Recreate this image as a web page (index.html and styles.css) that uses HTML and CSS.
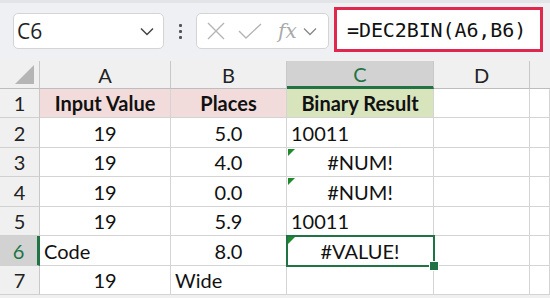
FILE: index.html
```html
<!DOCTYPE html>
<html lang="en">
<head>
  <meta charset="UTF-8" />
  <title>DEC2BIN</title>
  <link rel="stylesheet" href="styles.css">
</head>
<body>
  <div class="toolbar">
    <div class="namebox">
      <span>C6</span>
      <svg class="chev" width="14" height="9" viewBox="0 0 14 9"><path d="M1 1.5 L7 7.5 L13 1.5" fill="none" stroke="#444" stroke-width="1.5"/></svg>
    </div>
    <div class="dots"><i></i><i></i><i></i></div>
    <div class="fxbox">
      <svg width="20" height="20" viewBox="0 0 20 20"><path d="M2 2 L18 18 M18 2 L2 18" stroke="#b5b5b5" stroke-width="1.4"/></svg>
      <svg width="24" height="20" viewBox="0 0 24 20"><path d="M1 10 L8 17 L23 3" fill="none" stroke="#b5b5b5" stroke-width="1.4"/></svg>
      <span class="fx">fx</span>
      <svg width="14" height="9" viewBox="0 0 14 9"><path d="M1 1.5 L7 7.5 L13 1.5" fill="none" stroke="#888" stroke-width="1.3"/></svg>
    </div>
    <div class="formula">=DEC2BIN(A6,B6)</div>
  </div>

  <div class="sheet">
    <div class="corner"><span class="tri"></span></div>
    <div class="colhead">A</div>
    <div class="colhead">B</div>
    <div class="colhead active">C</div>
    <div class="colhead">D</div>
    <div class="colhead last"></div>

    <div class="rowhead">1</div>
    <div class="cell head pink">Input Value</div>
    <div class="cell head pink">Places</div>
    <div class="cell head green">Binary Result</div>
    <div class="cell"></div>
    <div class="cell"></div>

    <div class="rowhead">2</div>
    <div class="cell">19</div>
    <div class="cell">5.0</div>
    <div class="cell left">10011</div>
    <div class="cell"></div>
    <div class="cell"></div>

    <div class="rowhead">3</div>
    <div class="cell">19</div>
    <div class="cell">4.0</div>
    <div class="cell flag">#NUM!</div>
    <div class="cell"></div>
    <div class="cell"></div>

    <div class="rowhead">4</div>
    <div class="cell">19</div>
    <div class="cell">0.0</div>
    <div class="cell flag">#NUM!</div>
    <div class="cell"></div>
    <div class="cell"></div>

    <div class="rowhead">5</div>
    <div class="cell">19</div>
    <div class="cell">5.9</div>
    <div class="cell left">10011</div>
    <div class="cell"></div>
    <div class="cell"></div>

    <div class="rowhead active">6</div>
    <div class="cell left">Code</div>
    <div class="cell">8.0</div>
    <div class="cell flag selected">#VALUE!<span class="handle"></span></div>
    <div class="cell"></div>
    <div class="cell"></div>

    <div class="rowhead">7</div>
    <div class="cell">19</div>
    <div class="cell left">Wide</div>
    <div class="cell"></div>
    <div class="cell"></div>
    <div class="cell"></div>
  </div>
</body>
</html>
```

FILE: styles.css
```css
body {
  margin: 0;
  width: 550px;
  height: 298px;
  overflow: hidden;
  background: #f0f0f0;
  font-family: 'Lato', 'Open Sans', sans-serif;
  color: #1a1a1a;
}

.toolbar {
  height: 58px;
  box-sizing: border-box;
  border-top: 3px solid #e2e4e7;
  background: #eef0f3;
  display: flex;
  align-items: flex-start;
  padding-top: 4px;
}

.namebox {
  margin: 6px 0 0 13px;
  width: 151px;
  height: 36px;
  box-sizing: border-box;
  background: #fff;
  border: 1px solid #d4d4d4;
  border-radius: 5px;
  display: flex;
  align-items: center;
  justify-content: space-between;
  padding: 0 9px 0 3px;
  font-family: 'Open Sans', sans-serif;
  font-size: 21px;
  color: #222;
}

.dots {
  width: 32px;
  height: 36px;
  margin-top: 6px;
  display: flex;
  flex-direction: column;
  align-items: center;
  justify-content: center;
  gap: 3px;
}

.dots i {
  width: 3px;
  height: 3px;
  background: #555;
  border-radius: 1px;
}

.fxbox {
  margin-top: 6px;
  width: 133px;
  height: 36px;
  box-sizing: border-box;
  background: #fff;
  border: 1px solid #d4d4d4;
  border-radius: 5px;
  display: flex;
  align-items: center;
  gap: 12px;
  padding-left: 9px;
}

.fx {
  font-family: 'DejaVu Serif', serif;
  font-style: italic;
  font-size: 20px;
  color: #aaa;
  margin-left: 4px;
  margin-right: -6px;
}

.formula {
  margin: 0 0 0 5px;
  width: 209px;
  height: 45px;
  box-sizing: border-box;
  border: 3px solid #e0284f;
  background: #fff;
  font-family: 'DejaVu Sans Mono', monospace;
  font-size: 20px;
  color: #111;
  display: flex;
  align-items: center;
  padding-left: 10px;
  letter-spacing: -0.1px;
}

.sheet {
  margin-top: 3px;
  display: grid;
  grid-template-columns: 40px 131px 116px 147px 96px 20px;
  grid-template-rows: 28px 29px 30px 29px 30px 29px 30px 29px;
  background: #fff;
  font-size: 20px;
}

.corner,
.colhead,
.rowhead {
  background: #f0f0f0;
  color: #222;
  display: flex;
  align-items: center;
  justify-content: center;
  box-sizing: border-box;
  position: relative;
}

.corner {
  border-right: 1px solid #c8c8c8;
  border-bottom: 1px solid #bdbdbd;
}

.tri {
  position: absolute;
  right: 5px;
  bottom: 4px;
  width: 0;
  height: 0;
  border-left: 19px solid transparent;
  border-bottom: 19px solid #b5b5b5;
}

.colhead {
  border-right: 1px solid #c8c8c8;
  border-bottom: 1px solid #bdbdbd;
}

.colhead.active {
  background: #d2d2d2;
  color: #217346;
  border-bottom: 3px solid #217346;
}

.colhead.last {
  border-right: none;
}

.rowhead {
  border-right: 1px solid #c8c8c8;
  border-bottom: 1px solid #d0d0d0;
}

.rowhead.active {
  background: #d2d2d2;
  color: #217346;
  border-right: 3px solid #217346;
}

.cell {
  box-sizing: border-box;
  border-right: 1px solid #d4d4d4;
  border-bottom: 1px solid #d4d4d4;
  display: flex;
  align-items: center;
  justify-content: center;
  color: #111;
  position: relative;
}

.cell.left {
  justify-content: flex-start;
  padding-left: 4px;
}

.cell.head {
  font-weight: bold;
}

.pink {
  background: #f2dcdb;
}

.green {
  background: #d8e4bc;
}

.flag::before {
  content: "";
  position: absolute;
  left: 1px;
  top: 1px;
  border-top: 7px solid #1e8a2c;
  border-right: 7px solid transparent;
}

.selected {
  outline: 2px solid #217346;
  outline-offset: -1px;
  z-index: 2;
}

.handle {
  position: absolute;
  right: -6px;
  bottom: -6px;
  width: 8px;
  height: 8px;
  background: #217346;
  border: 1px solid #fff;
}
```
